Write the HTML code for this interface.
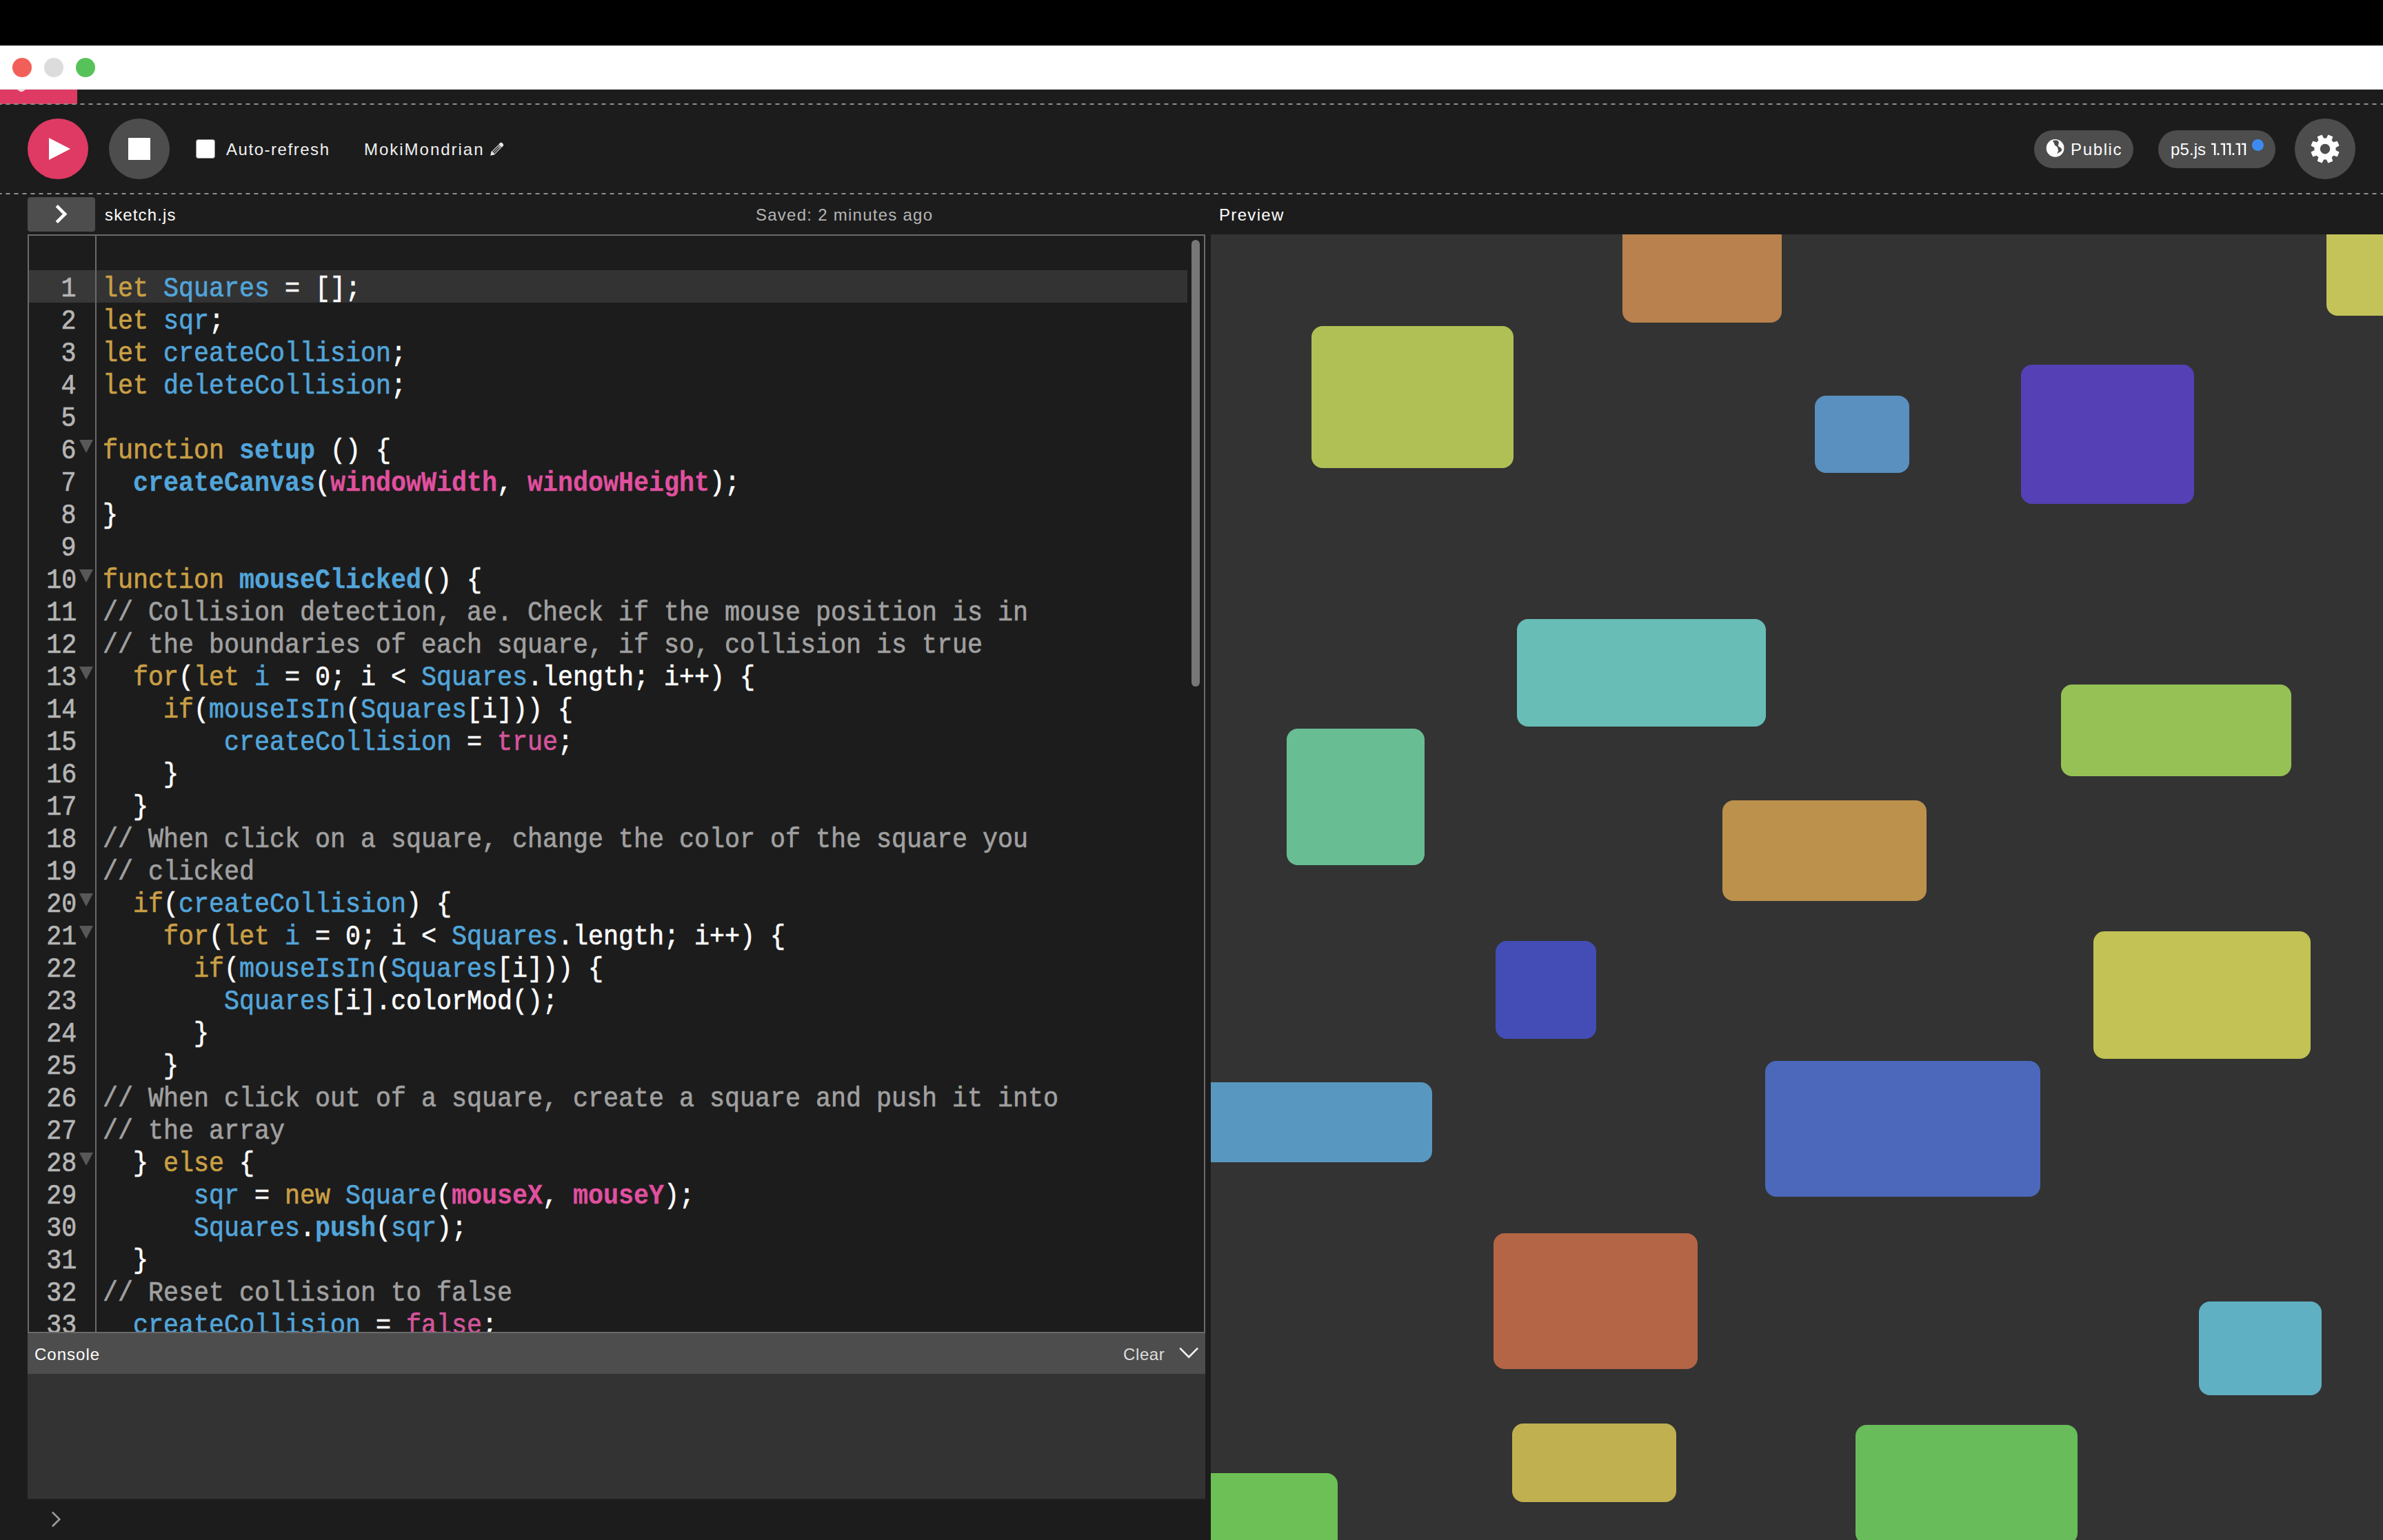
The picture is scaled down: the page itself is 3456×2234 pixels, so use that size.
<!DOCTYPE html><html lang="en"><head><meta charset="utf-8"><title>p5.js Web Editor | MokiMondrian</title><style>
*{box-sizing:border-box;margin:0;padding:0}
html,body{width:3456px;height:2234px;overflow:hidden;background:#1c1c1c}
body{position:relative;font-family:"Liberation Sans",sans-serif;font-size:24px;color:#fdfdfd}
.abs{position:absolute}
.t{position:absolute;white-space:pre;line-height:30px;height:30px}
#blk{left:0;top:0;width:3456px;height:66px;background:#000}
#wht{left:0;top:66px;width:3456px;height:64px;background:#fff;border-bottom:1.5px solid #e2e2e2;border-top:1px solid #f4f4f4}
.tl{position:absolute;width:28px;height:28px;border-radius:50%;top:84px}
#pinkb{left:0;top:130px;width:112px;height:21px;background:#de3a64}
.dash{position:absolute;left:0;width:3456px;height:2px;background:linear-gradient(90deg,#8f8f8f 0,#8f8f8f 6px,transparent 6px,transparent 12px) 8.5px 0/12px 2px repeat-x}
.circ{position:absolute;width:88px;height:88px;border-radius:50%;top:172px}
#chk{left:284.3px;top:202px;width:27.8px;height:28px;background:#fff;border:1.8px solid #8c8c8c;border-radius:3.5px}
#tog{left:40px;top:286px;width:98px;height:50px;background:#4d4d4d;border-radius:4px}
#ed{left:40px;top:340px;width:1708px;height:1594px;border:2px solid #6a6a6a;border-bottom:none;background:#1c1c1c}
#gsep{left:138px;top:342px;width:2px;height:1590px;background:#6a6a6a}
#hl{left:42px;top:392px;width:1680px;height:47px;background:#333}
#hlg{left:42px;top:392px;width:96px;height:47px;background:#383838}
#thumb{left:1728px;top:348px;width:12px;height:648px;border-radius:6px;background:#777}
#code{left:149px;top:392px;width:1560px;height:1540px;overflow:hidden}
#nums{left:42px;top:392px;width:96px;height:1540px;overflow:hidden}
.ln{position:absolute;left:0;height:47px;line-height:47px;font-family:"Liberation Mono",monospace;font-size:41.0px;white-space:pre;transform-origin:0 0;transform:scaleX(0.89416);color:#fdfdfd;padding-top:3.6px}
.nn{position:absolute;height:47px;line-height:47px;font-family:"Liberation Mono",monospace;font-size:41.0px;white-space:pre;transform-origin:100% 0;transform:scaleX(0.89416);color:#b5b5b5;right:27px;padding-top:3.6px}
.fold{position:absolute;left:72.5px;width:0;height:0;border-left:10.5px solid transparent;border-right:10.5px solid transparent;border-top:19px solid #585858}
.ln,.nn{-webkit-text-stroke:0.7px currentColor}.bd{-webkit-text-stroke:0.3px currentColor}
.k{color:#c99f45}.b{color:#52a5da}.p{color:#d4559b}.p.bd{color:#e0509f}.c{color:#a0a0a0}.bd{font-weight:bold}
#chead{left:40px;top:1932px;width:1708px;height:61px;background:#4d4d4d;border-top:2px solid #6a6a6a}
#cbody{left:40px;top:1993px;width:1708px;height:182px;background:#333;border-bottom:1.5px solid #262626}
#prev{left:1756px;top:340px;width:1700px;height:1894px;background:#333;overflow:hidden}
.r{position:absolute;border-radius:16px}
#t_auto{letter-spacing:1.540px}#t_name{letter-spacing:1.979px}#t_pub{letter-spacing:1.644px}#t_ver{letter-spacing:-1.973px}#t_sk{letter-spacing:1.140px}#t_saved{letter-spacing:1.255px}#t_prev{letter-spacing:1.323px}#t_con{letter-spacing:1.023px}#t_clr{letter-spacing:0.610px}
#t_ver{letter-spacing:0.1px}
#t_auto,#t_name{color:#f0f0f0}
.pill{position:absolute;top:188.6px;height:55.6px;border-radius:28px;background:#4d4d4d}
</style></head><body>
<div id="blk" class="abs"></div><div id="wht" class="abs"></div>
<div class="tl" style="left:18px;background:#f25f58"></div>
<div class="tl" style="left:64px;background:#dcdcdc"></div>
<div class="tl" style="left:110px;background:#58c25a"></div>
<div id="pinkb" class="abs"></div><svg class="abs" style="left:24px;top:130px" width="14" height="4"><path d="M1 0 L13 0 L8.5 3 L5.5 3 Z" fill="#f6d6de"/></svg>
<div class="dash" style="top:150px"></div><div class="dash" style="top:280px"></div>
<div class="circ" style="left:40px;background:#de3a64"></div>
<svg class="abs" style="left:40px;top:172px" width="88" height="88" viewBox="0 0 88 88"><path d="M31 28 L62 44 L31 60 Z" fill="#fff"/></svg>
<div class="circ" style="left:158px;background:#4d4d4d"></div>
<div class="abs" style="left:186px;top:200px;width:32px;height:32px;background:#fff"></div>
<div id="chk" class="abs"></div>
<div class="t" id="t_auto" style="left:328px;top:202px">Auto-refresh</div>
<div class="t" id="t_name" style="left:528px;top:202px">MokiMondrian</div>
<svg class="abs" id="pencil" style="left:700px;top:196px" width="44" height="44" viewBox="700 196 44 44"><g transform="translate(711.2 225.8) rotate(-45)" fill="#e9e9e9" stroke="none"><path d="M0 0 L4.8 -3 L6 -3 L6 3 L4.8 3 Z"/><path d="M5 -3 H18.4 V-1.95 H5 Z M5 -0.5 H18.4 V0.5 H5 Z M5 1.95 H18.4 V3 H5 Z"/><path d="M18 -3 H19 V3 H18 Z"/><path d="M19.9 -3.2 H22 A3.2 3.2 0 0 1 22 3.2 H19.9 Z"/></g></svg>
<div class="pill" style="left:2950px;width:144px"></div>
<svg class="abs" id="globe" style="left:2960px;top:196px" width="40" height="40" viewBox="2960 196 40 40"><circle cx="2980.6" cy="214.9" r="12.9" fill="#fdfdfd"/><path d="M2977.28 205.24 Q2976.50 204.46 2977.59 204.15 Q2978.68 203.84 2980.55 203.53 Q2982.42 203.22 2983.67 203.84 Q2984.92 204.46 2985.54 205.71 Q2986.16 206.96 2985.54 208.20 Q2984.92 209.45 2985.38 209.92 Q2985.85 210.39 2984.92 210.70 Q2983.98 211.01 2985.07 211.94 Q2986.16 212.88 2987.10 213.35 Q2988.03 213.81 2989.28 215.22 Q2990.53 216.62 2990.06 218.02 Q2989.59 219.42 2988.50 220.05 Q2987.41 220.67 2986.16 221.29 Q2984.92 221.92 2984.29 222.69 Q2983.67 223.47 2983.98 221.76 Q2984.29 220.05 2984.92 219.27 Q2985.54 218.49 2984.92 217.40 Q2984.29 216.31 2984.45 215.37 Q2984.60 214.44 2983.51 213.35 Q2982.42 212.26 2981.18 211.48 Q2979.93 210.70 2979.62 209.45 Q2979.31 208.20 2978.68 207.11 Q2978.06 206.02 2977.28 205.24 Z" fill="#4a4a4a"/></svg>
<div class="t" id="t_pub" style="left:3003px;top:202px">Public</div>
<div class="pill" style="left:3130px;width:169.5px"></div>
<div class="t" id="t_ver" style="left:3148px;top:202px">p5.js</div>
<svg class="abs" style="left:0;top:0" width="3456" height="260" viewBox="0 0 3456 260"><g fill="#fdfdfd"><path d="M3207.0 207.7 H3213.4 V224.9 H3210.9 V210.0 H3207.0 Z M3220.6 207.7 H3227.0 V224.9 H3224.5 V210.0 H3220.6 Z M3228.9 207.7 H3235.3 V224.9 H3232.8 V210.0 H3228.9 Z M3242.5 207.7 H3248.9 V224.9 H3246.4 V210.0 H3242.5 Z M3250.8 207.7 H3257.2 V224.9 H3254.7 V210.0 H3250.8 Z "/><circle cx="3217.0" cy="223.4" r="1.55"/><circle cx="3238.9" cy="223.4" r="1.55"/></g></svg>
<div class="abs" style="left:3265.5px;top:202px;width:17px;height:17px;border-radius:50%;background:#3d8bf2"></div>
<div class="circ" style="left:3328px;background:#4d4d4d"></div>
<svg class="abs" id="gear" style="left:3328px;top:172px" width="88" height="88" viewBox="0 0 88 88"><path d="M63.98 41.00 L63.98 47.00 L58.61 47.39 L56.73 51.94 L60.25 56.00 L56.00 60.25 L51.94 56.73 L47.39 58.61 L47.00 63.98 L41.00 63.98 L40.61 58.61 L36.06 56.73 L32.00 60.25 L27.75 56.00 L31.27 51.94 L29.39 47.39 L24.02 47.00 L24.02 41.00 L29.39 40.61 L31.27 36.06 L27.75 32.00 L32.00 27.75 L36.06 31.27 L40.61 29.39 L41.00 24.02 L47.00 24.02 L47.39 29.39 L51.94 31.27 L56.00 27.75 L60.25 32.00 L56.73 36.06 L58.61 40.61 Z M52.00 44.00 A8 8 0 1 0 36.00 44.00 A8 8 0 1 0 52.00 44.00 Z" fill="#fdfdfd" fill-rule="evenodd" stroke="#fdfdfd" stroke-width="1.5" stroke-linejoin="round" transform="rotate(22.5 44 44)"/></svg>
<div id="tog" class="abs"></div>
<svg class="abs" style="left:76px;top:295px" width="28" height="32" viewBox="0 0 28 32"><path d="M6.3 3.6 L18.2 15.5 L6.3 27.4" fill="none" stroke="#fdfdfd" stroke-width="4.6"/></svg>
<div class="t" id="t_sk" style="left:152px;top:297px">sketch.js</div>
<div class="t" id="t_saved" style="left:1096px;top:297px;color:#b5b5b5">Saved: 2 minutes ago</div>
<div class="t" id="t_prev" style="left:1768px;top:297px">Preview</div>
<div id="ed" class="abs"></div><div id="hl" class="abs"></div><div id="hlg" class="abs"></div><div id="gsep" class="abs"></div><div id="thumb" class="abs"></div>
<div id="nums" class="abs">
<div class="nn" style="top:0px">1</div>
<div class="nn" style="top:47px">2</div>
<div class="nn" style="top:94px">3</div>
<div class="nn" style="top:141px">4</div>
<div class="nn" style="top:188px">5</div>
<div class="nn" style="top:235px">6</div>
<div class="fold" style="top:245.5px"></div>
<div class="nn" style="top:282px">7</div>
<div class="nn" style="top:329px">8</div>
<div class="nn" style="top:376px">9</div>
<div class="nn" style="top:423px">10</div>
<div class="fold" style="top:433.5px"></div>
<div class="nn" style="top:470px">11</div>
<div class="nn" style="top:517px">12</div>
<div class="nn" style="top:564px">13</div>
<div class="fold" style="top:574.5px"></div>
<div class="nn" style="top:611px">14</div>
<div class="nn" style="top:658px">15</div>
<div class="nn" style="top:705px">16</div>
<div class="nn" style="top:752px">17</div>
<div class="nn" style="top:799px">18</div>
<div class="nn" style="top:846px">19</div>
<div class="nn" style="top:893px">20</div>
<div class="fold" style="top:903.5px"></div>
<div class="nn" style="top:940px">21</div>
<div class="fold" style="top:950.5px"></div>
<div class="nn" style="top:987px">22</div>
<div class="nn" style="top:1034px">23</div>
<div class="nn" style="top:1081px">24</div>
<div class="nn" style="top:1128px">25</div>
<div class="nn" style="top:1175px">26</div>
<div class="nn" style="top:1222px">27</div>
<div class="nn" style="top:1269px">28</div>
<div class="fold" style="top:1279.5px"></div>
<div class="nn" style="top:1316px">29</div>
<div class="nn" style="top:1363px">30</div>
<div class="nn" style="top:1410px">31</div>
<div class="nn" style="top:1457px">32</div>
<div class="nn" style="top:1504px">33</div>
</div>
<div id="code" class="abs">
<div class="ln" style="top:0px"><span class="k">let</span> <span class="b">Squares</span> = [];</div>
<div class="ln" style="top:47px"><span class="k">let</span> <span class="b">sqr</span>;</div>
<div class="ln" style="top:94px"><span class="k">let</span> <span class="b">createCollision</span>;</div>
<div class="ln" style="top:141px"><span class="k">let</span> <span class="b">deleteCollision</span>;</div>
<div class="ln" style="top:188px"></div>
<div class="ln" style="top:235px"><span class="k">function</span> <span class="b bd">setup</span> () {</div>
<div class="ln" style="top:282px">  <span class="b bd">createCanvas</span>(<span class="p bd">windowWidth</span>, <span class="p bd">windowHeight</span>);</div>
<div class="ln" style="top:329px">}</div>
<div class="ln" style="top:376px"></div>
<div class="ln" style="top:423px"><span class="k">function</span> <span class="b bd">mouseClicked</span>() {</div>
<div class="ln" style="top:470px"><span class="c">// Collision detection, ae. Check if the mouse position is in</span></div>
<div class="ln" style="top:517px"><span class="c">// the boundaries of each square, if so, collision is true</span></div>
<div class="ln" style="top:564px">  <span class="k">for</span>(<span class="k">let</span> <span class="b">i</span> = 0; i &lt; <span class="b">Squares</span>.length; i++) {</div>
<div class="ln" style="top:611px">    <span class="k">if</span>(<span class="b">mouseIsIn</span>(<span class="b">Squares</span>[i])) {</div>
<div class="ln" style="top:658px">        <span class="b">createCollision</span> = <span class="p">true</span>;</div>
<div class="ln" style="top:705px">    }</div>
<div class="ln" style="top:752px">  }</div>
<div class="ln" style="top:799px"><span class="c">// When click on a square, change the color of the square you</span></div>
<div class="ln" style="top:846px"><span class="c">// clicked</span></div>
<div class="ln" style="top:893px">  <span class="k">if</span>(<span class="b">createCollision</span>) {</div>
<div class="ln" style="top:940px">    <span class="k">for</span>(<span class="k">let</span> <span class="b">i</span> = 0; i &lt; <span class="b">Squares</span>.length; i++) {</div>
<div class="ln" style="top:987px">      <span class="k">if</span>(<span class="b">mouseIsIn</span>(<span class="b">Squares</span>[i])) {</div>
<div class="ln" style="top:1034px">        <span class="b">Squares</span>[i].colorMod();</div>
<div class="ln" style="top:1081px">      }</div>
<div class="ln" style="top:1128px">    }</div>
<div class="ln" style="top:1175px"><span class="c">// When click out of a square, create a square and push it into</span></div>
<div class="ln" style="top:1222px"><span class="c">// the array</span></div>
<div class="ln" style="top:1269px">  } <span class="k">else</span> {</div>
<div class="ln" style="top:1316px">      <span class="b">sqr</span> = <span class="k">new</span> <span class="b">Square</span>(<span class="p bd">mouseX</span>, <span class="p bd">mouseY</span>);</div>
<div class="ln" style="top:1363px">      <span class="b">Squares</span>.<span class="b bd">push</span>(<span class="b">sqr</span>);</div>
<div class="ln" style="top:1410px">  }</div>
<div class="ln" style="top:1457px"><span class="c">// Reset collision to false</span></div>
<div class="ln" style="top:1504px">  <span class="b">createCollision</span> = <span class="p">false</span>;</div>
</div>
<div id="chead" class="abs"></div><div id="cbody" class="abs"></div>
<div class="t" id="t_con" style="left:50px;top:1950px">Console</div>
<div class="t" id="t_clr" style="left:1629px;top:1950px;color:#dedede">Clear</div>
<svg class="abs" style="left:1706px;top:1950px" width="36" height="26" viewBox="0 0 36 26"><path d="M5.2 5.6 L18.15 18.7 L31.1 5.6" fill="none" stroke="#f2f2f2" stroke-width="2.7"/></svg>
<svg class="abs" style="left:70px;top:2188px" width="24" height="32" viewBox="0 0 24 32"><path d="M5.9 5.6 L16.2 15.9 L5.9 26.2" fill="none" stroke="#9a9a9a" stroke-width="2.7"/></svg>
<div id="prev" class="abs">
<div class="r" style="left:146.0px;top:133.0px;width:292.5px;height:206.0px;background:#b0c055"></div>
<div class="r" style="left:596.5px;top:-40.0px;width:231.0px;height:168.0px;background:#b9814d"></div>
<div class="r" style="left:875.7px;top:234.0px;width:137.3px;height:112.0px;background:#5990bf"></div>
<div class="r" style="left:1174.6px;top:189.0px;width:251.2px;height:202.4px;background:#5540b5"></div>
<div class="r" style="left:1618.4px;top:-40.0px;width:125.6px;height:157.6px;background:#c3c35a"></div>
<div class="r" style="left:444.0px;top:558.2px;width:360.6px;height:155.5px;background:#68bdb7"></div>
<div class="r" style="left:110.3px;top:716.7px;width:199.8px;height:198.3px;background:#68bd92"></div>
<div class="r" style="left:741.7px;top:821.3px;width:296.2px;height:145.4px;background:#bb914c"></div>
<div class="r" style="left:1233.2px;top:653.3px;width:333.8px;height:132.9px;background:#96c255"></div>
<div class="r" style="left:413.2px;top:1025.0px;width:146.2px;height:142.3px;background:#434db5"></div>
<div class="r" style="left:1280.4px;top:1011.2px;width:314.9px;height:185.2px;background:#c2c255"></div>
<div class="r" style="left:-56.0px;top:1229.6px;width:377.0px;height:116.7px;background:#5898c0"></div>
<div class="r" style="left:804.3px;top:1199.4px;width:399.0px;height:197.1px;background:#4b68bb"></div>
<div class="r" style="left:410.2px;top:1449.3px;width:295.7px;height:197.0px;background:#b46546"></div>
<div class="r" style="left:437.0px;top:1724.9px;width:237.9px;height:114.1px;background:#c0b050"></div>
<div class="r" style="left:-56.0px;top:1796.7px;width:240.0px;height:163.3px;background:#6dc055"></div>
<div class="r" style="left:1433.3px;top:1547.7px;width:177.5px;height:136.4px;background:#5fb0c3"></div>
<div class="r" style="left:934.8px;top:1726.8px;width:322.2px;height:173.2px;background:#68bd5a"></div>
</div>
</body></html>
